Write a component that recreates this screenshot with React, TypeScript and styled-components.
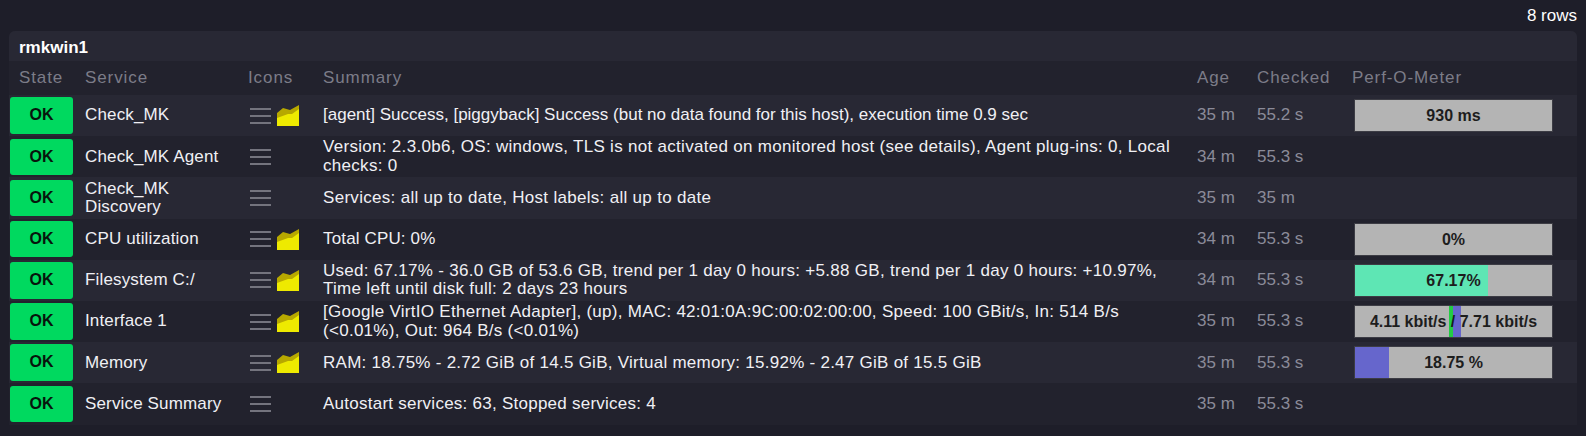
import React from 'react';
import styled, { createGlobalStyle } from 'styled-components';

const GlobalStyle = createGlobalStyle`
  html, body {
    margin: 0;
    padding: 0;
    background: #1e1e29;
    font-family: "Liberation Sans", Arial, sans-serif;
  }
`;

const Page = styled.div`
  width: 1586px;
  height: 436px;
  overflow: hidden;
  background: #1e1e29;
  padding: 0 9px;
  box-sizing: border-box;
`;

const RowCount = styled.div`
  height: 31px;
  padding-top: 6px;
  box-sizing: border-box;
  text-align: right;
  color: #fff;
  font-size: 17px;
  line-height: 20px;
`;

const Panel = styled.div`
  background: #252531;
  border-radius: 6px;
`;

const HostTitle = styled.div`
  height: 30px;
  padding-left: 10px;
  color: #fff;
  font-size: 17px;
  font-weight: bold;
  line-height: 33px;
  background: #282834;
  border-radius: 6px 6px 0 0;
`;

const COLUMNS = '76px 163px 75px 874px 60px 95px 1fr';

const HeaderRow = styled.div`
  display: grid;
  grid-template-columns: ${COLUMNS};
  height: 34px;
  align-items: center;
  background: #22222d;
  color: #7c7c88;
  font-size: 17px;
  letter-spacing: 0.9px;
`;

const HeaderCell = styled.div<{ $first?: boolean }>`
  padding-left: ${p => (p.$first ? '10px' : '0')};
`;

const Row = styled.div<{ $odd: boolean }>`
  display: grid;
  grid-template-columns: ${COLUMNS};
  height: 41.2px;
  align-items: center;
  background: ${p => (p.$odd ? '#282834' : '#22222d')};
  color: #f0f0f4;
  font-size: 17px;
  line-height: 18.4px;
`;

const StateCell = styled.div`
  padding-left: 1px;
`;

const OkBadge = styled.div`
  width: 63px;
  height: 36.5px;
  background: #00d95f;
  border-radius: 3px;
  color: #07140c;
  font-size: 16px;
  font-weight: bold;
  line-height: 36.5px;
  text-align: center;
`;

const ServiceName = styled.div`
  padding-right: 16px;
  letter-spacing: 0.15px;
`;

const IconCell = styled.div`
  display: flex;
  align-items: center;
  gap: 6px;
  padding-left: 2px;
`;

const MenuIcon = styled.svg`
  width: 21px;
  height: 16px;
  display: block;
`;

const GraphIcon = styled.svg`
  width: 22px;
  height: 21px;
  display: block;
`;

const Summary = styled.div<{ $tracking: number }>`
  padding-right: 14px;
  letter-spacing: ${p => p.$tracking}px;
`;

const Muted = styled.div`
  color: #8b8b99;
`;

const Meter = styled.div`
  position: relative;
  width: 199px;
  height: 33px;
  margin-left: 2px;
  background: #b4b4b4;
  border: 1px solid #3c3c44;
  box-sizing: border-box;
  overflow: hidden;
`;

const MeterFill = styled.div<{ $color: string }>`
  position: absolute;
  top: 0;
  bottom: 0;
  background: ${p => p.$color};
`;

const MeterLabel = styled.div`
  position: relative;
  text-align: center;
  color: #1d1d1d;
  font-size: 16px;
  font-weight: bold;
  line-height: 31px;
`;

type Fill = { left: number; width: number; color: string };
type Service = {
  name: string;
  graph: boolean;
  summary: string;
  tracking: number;
  age: string;
  checked: string;
  meter?: string;
  fills?: Fill[];
};

const services: Service[] = [
  { name: 'Check_MK', graph: true, summary: '[agent] Success, [piggyback] Success (but no data found for this host), execution time 0.9 sec', tracking: 0, age: '35 m', checked: '55.2 s', meter: '930 ms' },
  { name: 'Check_MK Agent', graph: false, summary: 'Version: 2.3.0b6, OS: windows, TLS is not activated on monitored host (see details), Agent plug-ins: 0, Local checks: 0', tracking: 0.3, age: '34 m', checked: '55.3 s' },
  { name: 'Check_MK Discovery', graph: false, summary: 'Services: all up to date, Host labels: all up to date', tracking: 0.3, age: '35 m', checked: '35 m' },
  { name: 'CPU utilization', graph: true, summary: 'Total CPU: 0%', tracking: 0.15, age: '34 m', checked: '55.3 s', meter: '0%' },
  { name: 'Filesystem C:/', graph: true, summary: 'Used: 67.17% - 36.0 GB of 53.6 GB, trend per 1 day 0 hours: +5.88 GB, trend per 1 day 0 hours: +10.97%, Time left until disk full: 2 days 23 hours', tracking: 0.29, age: '34 m', checked: '55.3 s', meter: '67.17%', fills: [{ left: 0, width: 133, color: '#5ee6b4' }] },
  { name: 'Interface 1', graph: true, summary: '[Google VirtIO Ethernet Adapter], (up), MAC: 42:01:0A:9C:00:02:00:00, Speed: 100 GBit/s, In: 514 B/s (<0.01%), Out: 964 B/s (<0.01%)', tracking: 0.28, age: '35 m', checked: '55.3 s', meter: '4.11 kbit/s / 7.71 kbit/s', fills: [{ left: 94, width: 4, color: '#22cc44' }, { left: 98, width: 8, color: '#6666cc' }] },
  { name: 'Memory', graph: true, summary: 'RAM: 18.75% - 2.72 GiB of 14.5 GiB, Virtual memory: 15.92% - 2.47 GiB of 15.5 GiB', tracking: 0.26, age: '35 m', checked: '55.3 s', meter: '18.75 %', fills: [{ left: 0, width: 34, color: '#6666cc' }] },
  { name: 'Service Summary', graph: false, summary: 'Autostart services: 63, Stopped services: 4', tracking: 0.25, age: '35 m', checked: '55.3 s' },
];

const Menu = () => (
  <MenuIcon viewBox="0 0 21 16">
    <path d="M0 1h21M0 8h21M0 15h21" stroke="#74747e" strokeWidth="2" fill="none" />
  </MenuIcon>
);

const Graph = () => (
  <GraphIcon viewBox="0 0 22 21">
    <path d="M0 8 L6 3 L13 5 L22 0 V21 H0 Z" fill="#b7a800" />
    <path d="M0 13 L11 9 L15 9 L22 4 V21 H0 Z" fill="#eeea00" />
  </GraphIcon>
);

export default function App() {
  return (
    <Page>
      <GlobalStyle />
      <RowCount>8 rows</RowCount>
      <Panel>
        <HostTitle>rmkwin1</HostTitle>
        <HeaderRow>
          <HeaderCell $first>State</HeaderCell>
          <HeaderCell>Service</HeaderCell>
          <HeaderCell>Icons</HeaderCell>
          <HeaderCell>Summary</HeaderCell>
          <HeaderCell>Age</HeaderCell>
          <HeaderCell>Checked</HeaderCell>
          <HeaderCell>Perf-O-Meter</HeaderCell>
        </HeaderRow>
        {services.map((s, i) => (
          <Row key={s.name} $odd={i % 2 === 0}>
            <StateCell><OkBadge>OK</OkBadge></StateCell>
            <ServiceName>{s.name}</ServiceName>
            <IconCell>
              <Menu />
              {s.graph && <Graph />}
            </IconCell>
            <Summary $tracking={s.tracking}>{s.summary}</Summary>
            <Muted>{s.age}</Muted>
            <Muted>{s.checked}</Muted>
            <div>
              {s.meter && (
                <Meter>
                  {(s.fills || []).map(f => (
                    <MeterFill key={f.left} $color={f.color} style={{ left: f.left, width: f.width }} />
                  ))}
                  <MeterLabel>{s.meter}</MeterLabel>
                </Meter>
              )}
            </div>
          </Row>
        ))}
      </Panel>
    </Page>
  );
}
